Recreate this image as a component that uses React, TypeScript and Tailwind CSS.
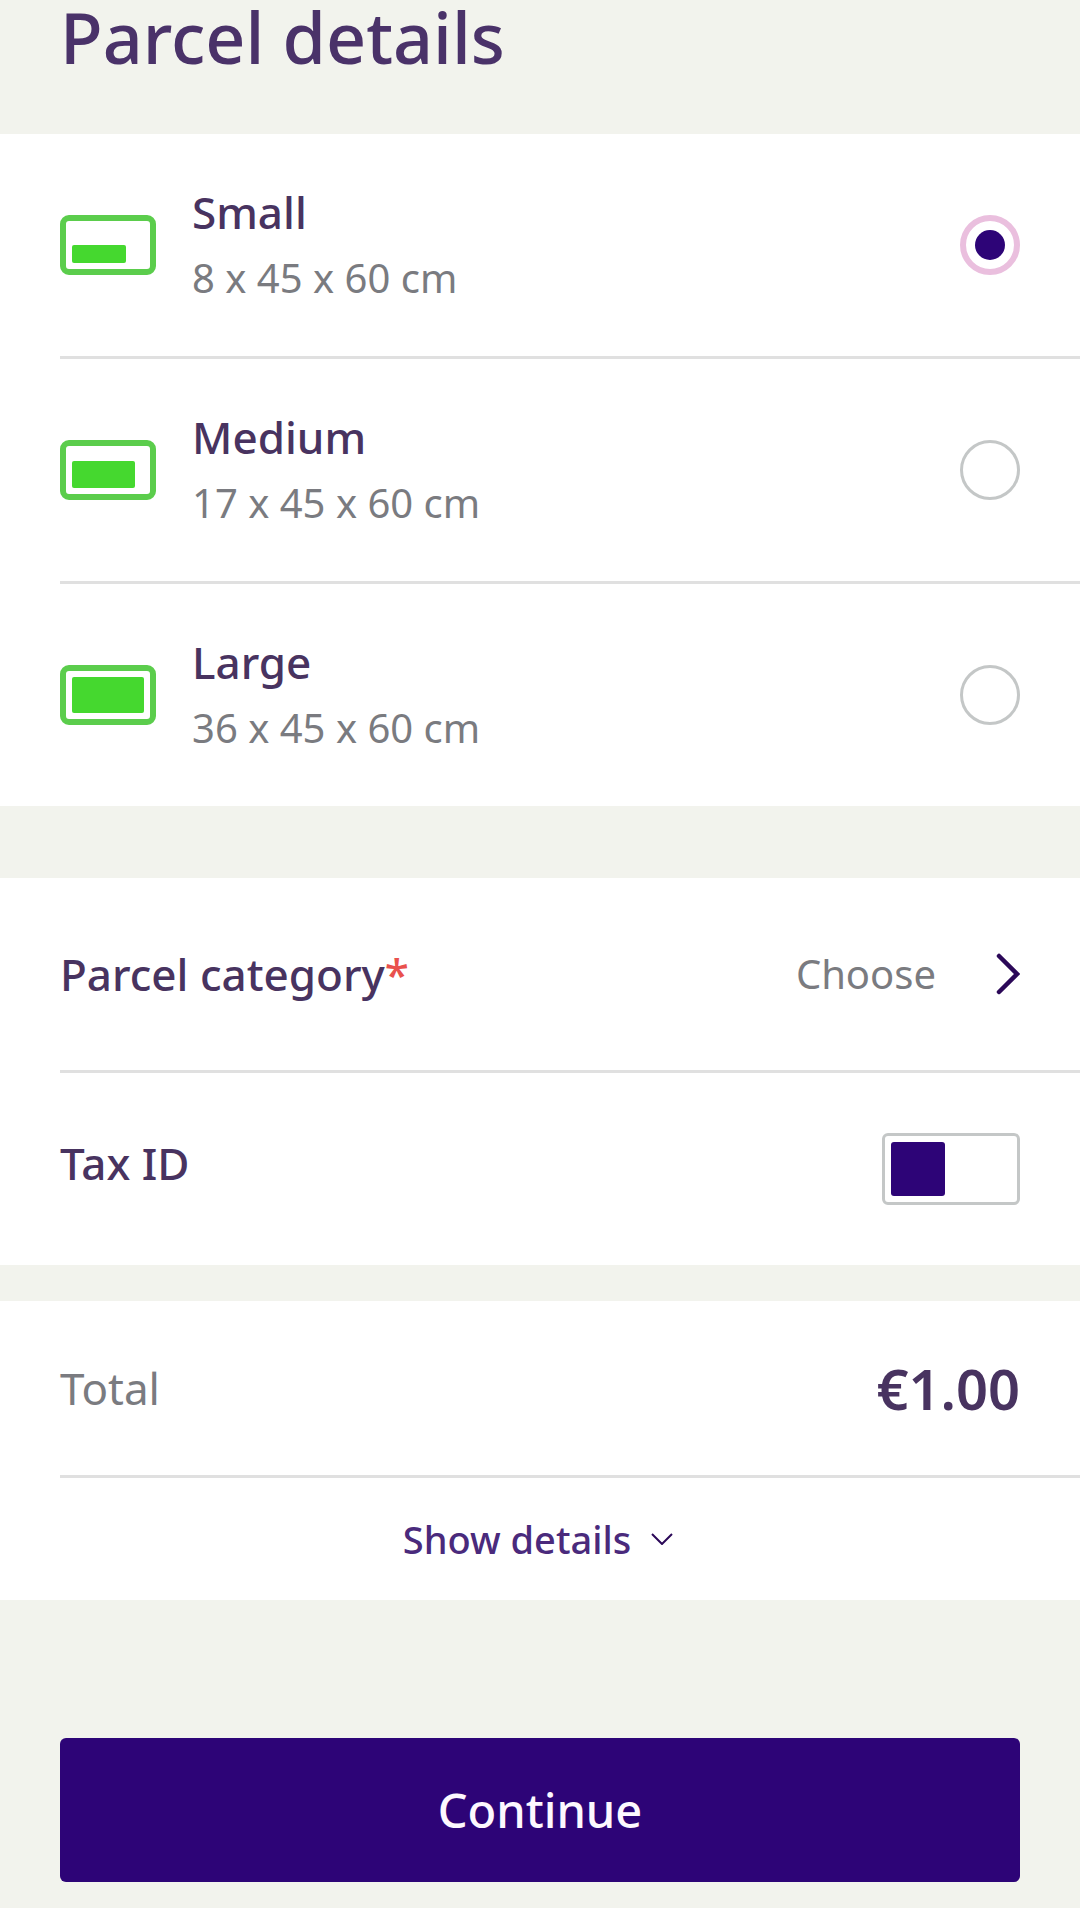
import React, { useState } from 'react';

interface ParcelSize {
    id: string;
    name: string;
    dimensions: string;
    fill: { width: number; height: number };
}

const SIZES: ParcelSize[] = [
    { id: 'small', name: 'Small', dimensions: '8 x 45 x 60 cm', fill: { width: 54, height: 18 } },
    { id: 'medium', name: 'Medium', dimensions: '17 x 45 x 60 cm', fill: { width: 63, height: 27 } },
    { id: 'large', name: 'Large', dimensions: '36 x 45 x 60 cm', fill: { width: 72, height: 36 } },
];

const SizeIcon: React.FC<{ fill: ParcelSize['fill'] }> = ({ fill }) => (
    <svg width="96" height="60" viewBox="0 0 96 60" className="shrink-0" aria-hidden="true">
        <rect x="3" y="3" width="90" height="54" rx="6" fill="none" stroke="#5bcd4c" strokeWidth="6" />
        <rect x="12" y={48 - fill.height} width={fill.width} height={fill.height} rx="2" fill="#45d82f" />
    </svg>
);

const Divider: React.FC = () => <div className="ml-[60px] h-[3px] bg-[#e0e0e0]" />;

const App: React.FC = () => {
    const [size, setSize] = useState('small');
    const [hasTaxId, setHasTaxId] = useState(false);

    return (
        <main className="min-h-screen bg-[#f2f3ed] pb-[26px] font-['Noto_Sans',sans-serif] text-[44px] leading-[66px] font-medium text-[#483360]">
            <h1 className="px-[60px] pb-[60px] text-[70px] leading-[74px] text-[#4a3269]">Parcel details</h1>

            {/* Size picker */}
            <section className="bg-white" role="radiogroup" aria-label="Parcel size">
                {SIZES.map((s, i) => (
                    <React.Fragment key={s.id}>
                        {i > 0 && <Divider />}
                        <label className="flex h-[222px] items-center px-[60px]">
                            <SizeIcon fill={s.fill} />
                            <span className="ml-9 flex flex-1 flex-col">
                                <span>{s.name}</span>
                                <span className="text-[40px] font-normal text-[#7a7b80]">{s.dimensions}</span>
                            </span>
                            <input
                                type="radio"
                                name="size"
                                value={s.id}
                                checked={size === s.id}
                                onChange={() => setSize(s.id)}
                                className="grid size-[60px] shrink-0 appearance-none place-items-center rounded-full border-[3px] border-[#c4c7c7] checked:border-[6px] checked:border-[#eabfde] checked:before:size-[30px] checked:before:rounded-full checked:before:bg-[#2d0477] checked:before:content-['']"
                            />
                        </label>
                    </React.Fragment>
                ))}
            </section>

            {/* Category and tax */}
            <section className="mt-[72px] bg-white">
                <button type="button" className="flex h-[192px] w-full items-center px-[60px] text-left">
                    <span className="flex-1">
                        Parcel category<span className="text-[#e9514d]">*</span>
                    </span>
                    <span className="text-[40px] font-normal text-[#7a7b80]">Choose</span>
                    <svg width="24" height="42" viewBox="0 0 24 42" className="ml-[60px]" fill="none" stroke="#2b0858" strokeWidth="4.5" strokeLinecap="round" aria-hidden="true">
                        <path d="M3 3 L21 21 L3 39" />
                    </svg>
                </button>
                <Divider />
                <div className="flex h-[192px] items-center justify-between px-[60px]">
                    <label htmlFor="tax-id" className="pb-3">Tax ID</label>
                    <input
                        id="tax-id"
                        type="checkbox"
                        role="switch"
                        checked={hasTaxId}
                        onChange={(e) => setHasTaxId(e.target.checked)}
                        className="flex h-[72px] w-[138px] appearance-none items-center rounded-md border-[3px] border-[#c4c7c7] px-1.5 before:size-[54px] before:rounded-[3px] before:bg-[#2d0477] before:content-[''] checked:justify-end"
                    />
                </div>
            </section>

            {/* Price summary */}
            <section className="mt-9 bg-white">
                <div className="flex h-[174px] items-center justify-between px-[60px]">
                    <span className="font-normal text-[#7a7b80]">Total</span>
                    <span className="text-[56px] font-semibold">€1.00</span>
                </div>
                <Divider />
                <button type="button" className="flex h-[122px] w-full items-center justify-center gap-5 pr-1 text-[38px] text-[#4a2a7c]">
                    Show details
                    <svg width="22" height="12" viewBox="0 0 22 12" fill="none" stroke="#2b0858" strokeWidth="2" aria-hidden="true">
                        <path d="M1 1 L11 11 L21 1" />
                    </svg>
                </button>
            </section>

            <div className="mt-[138px] px-[60px]">
                <button type="button" className="h-[144px] w-full rounded-md bg-[#2d0477] text-[47px] text-[#fdf8ff]">
                    Continue
                </button>
            </div>
        </main>
    );
};

export default App;
